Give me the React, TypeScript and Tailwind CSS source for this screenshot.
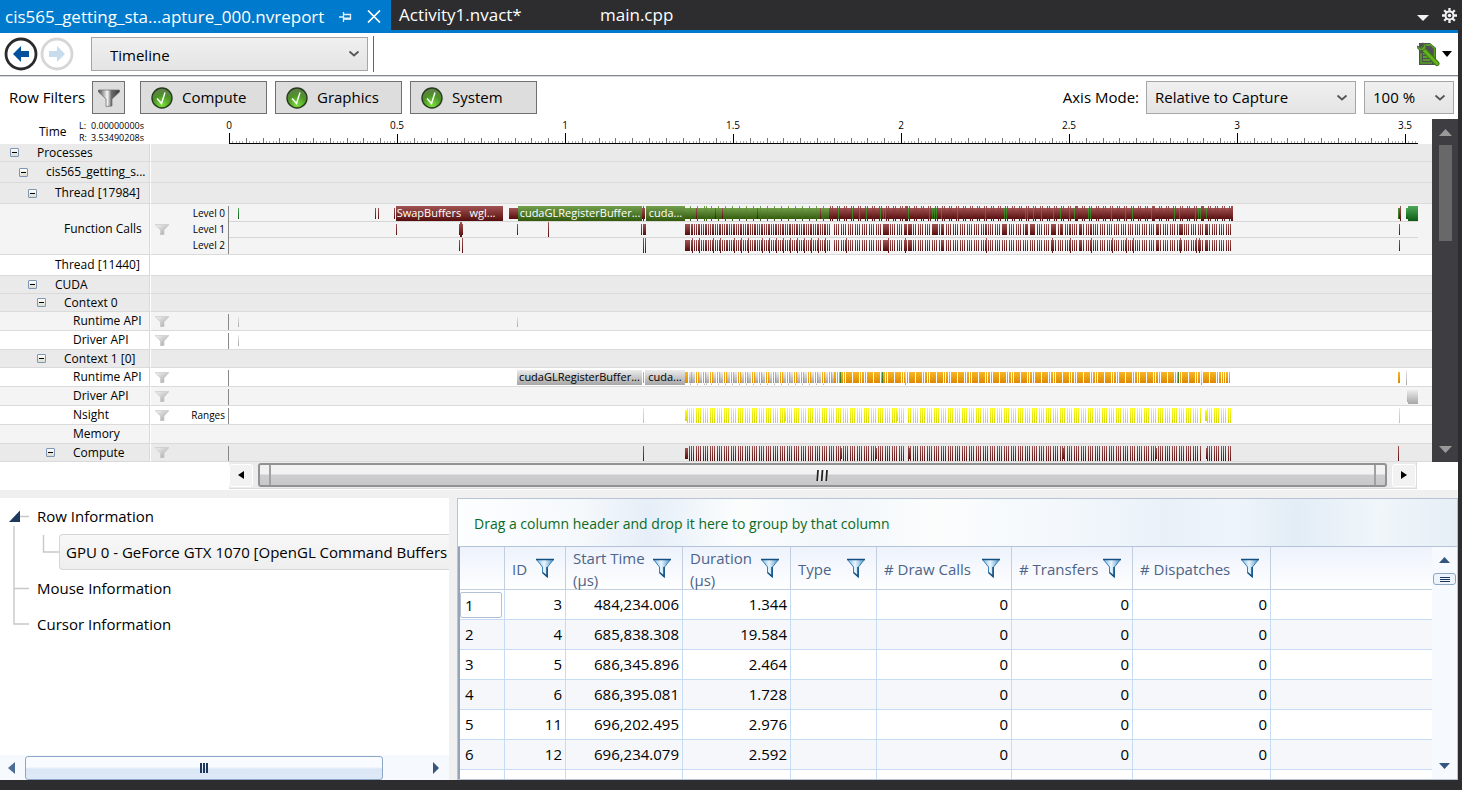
import type { ReactNode } from 'react';

type Span = [number, number];
type Fill = 'maroon' | 'green' | 'grass' | 'olive' | 'orange' | 'silver' | 'yellow';
type Layer = { fill: Fill; y: number; h: number; spans: Span[] };
type Block = { label: string; start: number; width: number; tone: string };

const AXIS_START = 229;
const AXIS_WIDTH = 1189;

const one = (xs: number[], w = 1): Span[] => xs.map((x) => [x, w]);

const every = (from: number, to: number, step: number, parts: Span[]): Span[] => {
  const out: Span[] = [];
  for (let x = from; x < to; x += step) {
    for (const [dx, w] of parts) if (x + dx + w <= to) out.push([x + dx, w]);
  }
  return out;
};

const toPath = (spans: Span[], y: number, h: number) =>
  spans.map(([x, w]) => `M${x} ${y}h${w}v${h}h${-w}z`).join('');

const swatches: Record<Fill, [string, string]> = {
  maroon: ['#a25353', '#560d0d'],
  green: ['#73a04b', '#335a0c'],
  grass: ['#4fa85a', '#0b5c12'],
  olive: ['#4f8f3c', '#2f7410'],
  orange: ['#f8b824', '#de8700'],
  silver: ['#ececec', '#a6a6a6'],
  yellow: ['#ffff22', '#d6d600'],
};

const Gradients = () => (
  <svg width="0" height="0" className="absolute" aria-hidden="true">
    <defs>
      {(Object.keys(swatches) as Fill[]).map((k) => (
        <linearGradient key={k} id={`g-${k}`} x1="0" y1="0" x2="0" y2="1">
          <stop offset="0" stopColor={swatches[k][0]} />
          <stop offset="1" stopColor={swatches[k][1]} />
        </linearGradient>
      ))}
      <linearGradient id="g-funnel" x1="0" y1="0" x2="1" y2="1">
        <stop offset="0" stopColor="#f4f4f4" />
        <stop offset="1" stopColor="#a2a2a2" />
      </linearGradient>
      <linearGradient id="g-funnel-dark" x1="0" y1="0" x2="1" y2="0">
        <stop offset="0" stopColor="#4a4a4a" />
        <stop offset="0.42" stopColor="#f6f6f6" />
        <stop offset="0.62" stopColor="#6a6a6a" />
        <stop offset="1" stopColor="#3a3a3a" />
      </linearGradient>
      <linearGradient id="g-funnel-blue" x1="0" y1="0" x2="1" y2="0">
        <stop offset="0" stopColor="#7ab8e4" />
        <stop offset="0.45" stopColor="#eaf6fd" />
        <stop offset="1" stopColor="#4a92ca" />
      </linearGradient>
      <radialGradient id="g-check" cx="0.5" cy="0.85" r="0.8">
        <stop offset="0" stopColor="#7ce03c" />
        <stop offset="0.6" stopColor="#4c9426" />
        <stop offset="1" stopColor="#5f7d4c" />
      </radialGradient>
    </defs>
  </svg>
);

const Chart = ({ height, layers, lines = [] }: { height: number; layers: Layer[]; lines?: number[] }) => (
  <svg
    className="block w-full"
    height={height}
    viewBox={`${AXIS_START} 0 ${AXIS_WIDTH} ${height}`}
    preserveAspectRatio="none"
    shapeRendering="crispEdges"
    aria-hidden="true"
  >
    {lines.map((y) => (
      <rect key={y} x={AXIS_START} y={y} width={AXIS_WIDTH} height="1" fill="#d6d6d6" />
    ))}
    {layers.map((l, i) => (
      <path key={i} d={toPath(l.spans, l.y, l.h)} fill={`url(#g-${l.fill})`} />
    ))}
  </svg>
);

const SmallFunnel = () => (
  <svg width="14" height="11" viewBox="0 0 14 11" aria-hidden="true">
    <path d="M0 0.5h14L9 6v4.5L5.5 11V6z" fill="url(#g-funnel)" stroke="#c4c4c4" strokeWidth="0.6" />
  </svg>
);

const levelOneEarly = every(691, 832, 7, [[0, 2], [3, 1], [5, 1]]);
const levelLate = every(834, 1231, 7, [[0, 1], [2, 1], [4, 1]]);

const functionLayers: Layer[] = [
  { fill: 'grass', y: 4, h: 11, spans: one([238]) },
  { fill: 'maroon', y: 4, h: 11, spans: [[375, 1], [378, 1], [394, 1], [509, 9], [642, 1], [644, 1]] },
  { fill: 'maroon', y: 2, h: 15, spans: one([643]) },
  { fill: 'green', y: 4, h: 11, spans: [[685, 144]] },
  { fill: 'green', y: 2, h: 15, spans: [...every(690, 829, 7, [[0, 1]]), [706, 1]] },
  { fill: 'maroon', y: 4, h: 11, spans: [...one([696, 715, 722, 757, 820]), [829, 403]] },
  { fill: 'maroon', y: 2, h: 15, spans: [...every(830, 1230, 7, [[0, 1], [2, 1]]), [905, 3], [1076, 2], [1153, 2], [1202, 2], [1231, 2]] },
  {
    fill: 'olive',
    y: 4,
    h: 11,
    spans: one([
      838, 852, 859, 866, 880, 883, 885, 908, 929, 932, 934, 936, 941, 957, 985, 1004, 1006, 1025, 1027, 1033,
      1041, 1053, 1060, 1069, 1074, 1088, 1090, 1111, 1125, 1132, 1151, 1174, 1179, 1195, 1198, 1200, 1206, 1398,
    ]),
  },
  { fill: 'maroon', y: 2, h: 15, spans: [[1400, 1]] },
  { fill: 'maroon', y: 4, h: 11, spans: [[1399, 1]] },
  { fill: 'grass', y: 4, h: 11, spans: [[1406, 2]] },
  { fill: 'grass', y: 2, h: 15, spans: [[1408, 10]] },
  {
    fill: 'maroon',
    y: 20,
    h: 11,
    spans: [
      [396, 1], [459, 4], [517, 1], [641, 1], [643, 3], [685, 5], ...levelOneEarly, ...levelLate,
      [883, 6], [904, 2], [909, 3], [932, 6], [941, 3], [985, 2], [1002, 4], [1025, 2], [1031, 3], [1051, 4],
      [1061, 2], [1069, 2], [1079, 3], [1090, 2], [1156, 3], [1179, 4], [1205, 3], [1399, 1],
    ],
  },
  { fill: 'maroon', y: 18, h: 15, spans: [[460, 2], [548, 1]] },
  {
    fill: 'maroon',
    y: 36,
    h: 11,
    spans: [
      [459, 1], [685, 5], ...levelOneEarly, ...levelLate, [884, 4], [904, 2], [909, 3], [941, 3],
      [1079, 3], [1156, 3], [1205, 3], [1399, 1],
    ],
  },
  {
    fill: 'maroon',
    y: 34,
    h: 15,
    spans: one([
      462, 643, 645, 692, 699, 713, 720, 734, 741, 748, 762, 769, 776, 783, 790, 797, 804, 811, 818, 825, 846,
      888, 905, 986, 1052, 1070, 1091, 1112, 1126, 1133, 1180, 1196, 1199,
    ]),
  },
];

const runtimeLayers: Layer[] = [
  { fill: 'orange', y: 4, h: 11, spans: [[643, 1], [685, 3]] },
  { fill: 'silver', y: 4, h: 11, spans: [[689, 2], ...every(691, 835, 7, [[1, 3]])] },
  { fill: 'silver', y: 15, h: 2, spans: [...every(690, 828, 7, [[0, 1]]), [706, 1]] },
  { fill: 'orange', y: 4, h: 11, spans: every(691, 835, 7, [[0, 1], [5, 1]]) },
  { fill: 'orange', y: 4, h: 11, spans: every(834, 1231, 7, [[0, 2], [3, 1], [5, 1]]) },
  { fill: 'orange', y: 4, h: 11, spans: [...every(847, 1228, 21, [[0, 4], [7, 4]]), [1398, 2]] },
  { fill: 'olive', y: 4, h: 11, spans: one([840, 882, 1178]) },
  { fill: 'silver', y: 2, h: 15, spans: [[905, 1], [1201, 1], [1406, 1]] },
];

const tripled = (from: number): Span[] =>
  every(from, 1232, 7, [[0, 1], [2, 1], [4, 1]]).filter(([x]) => x !== 906 && x !== 1202 && x !== 1204);

type Row = {
  label: string;
  depth: number;
  open?: boolean;
  height: string;
  bg: string;
  filter?: boolean;
  levels?: string[];
  chart?: ReactNode;
  blocks?: Block[];
};

const GROUP = 'bg-[#eaeaea]';
const SHADE = 'bg-[#f4f4f4]';
const maroonBlock = 'bg-linear-to-b from-[#a25353] to-[#560d0d] text-white';
const greenBlock = 'bg-linear-to-b from-[#73a04b] to-[#335a0c] text-white';
const silverBlock = 'bg-linear-to-b from-[#ececec] to-[#a6a6a6] text-black';

const rows: Row[] = [
  { label: 'Processes', depth: 0, open: true, height: 'h-[18px]', bg: GROUP },
  { label: 'cis565_getting_s...', depth: 1, open: true, height: 'h-[21px]', bg: GROUP },
  { label: 'Thread [17984]', depth: 2, open: true, height: 'h-[21px]', bg: GROUP },
  {
    label: 'Function Calls',
    depth: 3,
    height: 'h-[51px]',
    bg: SHADE,
    filter: true,
    levels: ['Level 0', 'Level 1', 'Level 2'],
    chart: <Chart height={50} layers={functionLayers} lines={[17, 33]} />,
    blocks: [
      { label: 'SwapBuffers', start: 396, width: 66, tone: maroonBlock },
      { label: 'wgl...', start: 462, width: 41, tone: maroonBlock },
      { label: 'cudaGLRegisterBuffer...', start: 518, width: 124, tone: greenBlock },
      { label: 'cuda...', start: 646, width: 39, tone: greenBlock },
    ],
  },
  { label: 'Thread [11440]', depth: 2, height: 'h-[21px]', bg: 'bg-white' },
  { label: 'CUDA', depth: 2, open: true, height: 'h-[18px]', bg: GROUP },
  { label: 'Context 0', depth: 3, open: true, height: 'h-[18px]', bg: GROUP },
  {
    label: 'Runtime API', depth: 4, height: 'h-[19px]', bg: SHADE, filter: true,
    chart: <Chart height={18} layers={[{ fill: 'silver', y: 4, h: 11, spans: one([238, 517]) }]} />,
  },
  {
    label: 'Driver API', depth: 4, height: 'h-[19px]', bg: 'bg-white', filter: true,
    chart: <Chart height={18} layers={[{ fill: 'silver', y: 4, h: 11, spans: one([238]) }]} />,
  },
  { label: 'Context 1 [0]', depth: 3, open: true, height: 'h-[18px]', bg: GROUP },
  {
    label: 'Runtime API', depth: 4, height: 'h-[19px]', bg: 'bg-white', filter: true,
    chart: <Chart height={18} layers={runtimeLayers} />,
    blocks: [
      { label: 'cudaGLRegisterBuffer...', start: 517, width: 125, tone: silverBlock },
      { label: 'cuda...', start: 645, width: 40, tone: silverBlock },
    ],
  },
  {
    label: 'Driver API', depth: 4, height: 'h-[19px]', bg: SHADE, filter: true,
    chart: <Chart height={18} layers={[{ fill: 'silver', y: 3, h: 12, spans: [[1407, 1]] }, { fill: 'silver', y: 3, h: 14, spans: [[1408, 10]] }]} />,
  },
  {
    label: 'Nsight', depth: 4, height: 'h-[19px]', bg: 'bg-white', filter: true, levels: ['Ranges'],
    chart: (
      <Chart
        height={18}
        layers={[
          { fill: 'yellow', y: 4, h: 11, spans: [[685, 2], [785, 1], [897, 1], [1205, 2]] },
          { fill: 'yellow', y: 2, h: 15, spans: [[643, 1], [687, 1], ...tripled(689), [1399, 1]] },
        ]}
      />
    ),
  },
  { label: 'Memory', depth: 4, height: 'h-[19px]', bg: SHADE },
  {
    label: 'Compute', depth: 4, open: true, height: 'h-[18px]', bg: GROUP, filter: true,
    chart: (
      <Chart
        height={17}
        layers={[
          { fill: 'maroon', y: 4, h: 11, spans: [[685, 3], [841, 1], [876, 1], [908, 3], [1063, 2], [1155, 2], [1206, 2]] },
          { fill: 'maroon', y: 2, h: 15, spans: [[643, 1], ...tripled(689), [1398, 1]] },
        ]}
      />
    ),
  },
];

const indents = ['pl-[10px]', 'pl-[19px]', 'pl-[28px]', 'pl-[37px]', 'pl-[46px]'];
const pct = (n: number) => `${(n / AXIS_WIDTH) * 100}%`;

const TimelineRow = ({ row }: { row: Row }) => (
  <div className={`flex text-[12px] ${row.height} ${row.bg}`}>
    <div className={`flex w-[150px] shrink-0 items-center overflow-hidden border-r border-b border-[#dadada] ${indents[row.depth]}`}>
      {row.open ? (
        <button
          aria-label={`Collapse ${row.label}`}
          className="flex h-[9px] w-[9px] shrink-0 items-center justify-center rounded-[1px] border border-[#7d96b4] bg-linear-to-b from-white to-[#dcdcd4]"
        >
          <span className="h-px w-[5px] bg-black" />
        </button>
      ) : (
        <span className="w-[9px] shrink-0" />
      )}
      <span className="ml-[18px] leading-4 whitespace-nowrap">{row.label}</span>
    </div>
    <div className="flex min-w-0 flex-1 border-b border-l border-b-[#dadada] border-l-white">
      <div className="flex w-[78px] shrink-0 items-center pr-[4px] pl-[4px]">
        {row.filter && (
          <button aria-label={`Filter ${row.label}`}>
            <SmallFunnel />
          </button>
        )}
        {row.levels && (
          <div className="ml-auto text-right text-[10px] leading-4">
            {row.levels.map((l) => (
              <div key={l}>{l}</div>
            ))}
          </div>
        )}
      </div>
      {row.chart && (
        <div className="relative mr-[14px] min-w-0 flex-1">
          <span className="absolute top-[2px] bottom-0 -left-px w-px bg-[#888]" />
          {row.chart}
          {row.blocks?.map((b) => (
            <span
              key={b.start}
              className={`absolute top-[2px] h-[15px] overflow-hidden text-center text-[11px] leading-[14px] whitespace-nowrap ${b.tone}`}
              style={{ left: pct(b.start - AXIS_START), width: pct(b.width) }}
            >
              {b.label}
            </span>
          ))}
        </div>
      )}
    </div>
  </div>
);

const Ruler = () => {
  const ticks = Array.from({ length: 354 }, (_, i) => i);
  return (
    <div className="relative mr-[14px] h-[25px] min-w-0 flex-1">
      <svg
        className="block h-[25px] w-full"
        viewBox={`0 0 ${AXIS_WIDTH} 25`}
        preserveAspectRatio="none"
        shapeRendering="crispEdges"
        aria-hidden="true"
      >
        {ticks.map((i) => {
          const top = i % 100 === 0 ? 14 : i % 50 === 0 ? 15 : i % 5 === 0 ? 19 : 22;
          const color = i % 50 === 0 ? '#000' : i % 5 === 0 ? '#777' : '#aaa';
          return <rect key={i} x={Math.round(i * 3.36)} y={top} width="1" height={24 - top} fill={color} />;
        })}
        <rect x="0" y="24" width={AXIS_WIDTH} height="1" fill="#000" />
      </svg>
      {['0', '0.5', '1', '1.5', '2', '2.5', '3', '3.5'].map((t, i) => (
        <span
          key={t}
          className="absolute top-0 -translate-x-1/2 text-[10px] leading-3"
          style={{ left: pct(i * 168) }}
        >
          {t}
        </span>
      ))}
    </div>
  );
};

const Chevron = () => (
  <svg width="12" height="8" viewBox="0 0 12 8" className="pointer-events-none absolute inset-y-0 right-[8px] my-auto" aria-hidden="true">
    <path d="M1.5 1.5l4.5 4 4.5-4" fill="none" stroke="#555" strokeWidth="1.7" />
  </svg>
);

const Picker = ({ label, value, box, pad }: { label: string; value: string; box: string; pad: string }) => (
  <span className={`relative inline-block ${box}`}>
    <select
      aria-label={label}
      defaultValue={value}
      className={`h-full w-full appearance-none border border-[#a6a6a6] bg-linear-to-b from-[#f0f0f0] to-[#e4e4e4] text-[15px] ${pad}`}
    >
      <option>{value}</option>
    </select>
    <Chevron />
  </span>
);

const FilterToggle = ({ label }: { label: string }) => (
  <button aria-pressed="true" className="flex h-[33px] w-[127px] items-center border border-[#707070] bg-[#dddddd] pl-[10px]">
    <svg width="22" height="22" viewBox="0 0 22 22" aria-hidden="true">
      <circle cx="11" cy="11" r="10" fill="url(#g-check)" stroke="#273b1c" strokeWidth="1.4" />
      <path d="M6 11.5l4.5 5L14 5.5" fill="none" stroke="#fff" strokeWidth="1.4" />
    </svg>
    <span className="ml-[9px] text-[15px]">{label}</span>
  </button>
);

const NavButton = ({ back }: { back?: boolean }) => (
  <button aria-label={back ? 'Back' : 'Forward'} className="shrink-0">
    <svg width="34" height="34" viewBox="0 0 34 34" aria-hidden="true">
      <circle cx="17" cy="17" r="15" fill="#fff" stroke={back ? '#2b2b2b' : '#d6d6d6'} strokeWidth="2.8" />
      {back ? (
        <path d="M9 17l8-8v5h8v6h-8v5z" fill="#00529c" />
      ) : (
        <path d="M25 17l-8-8v5H9v6h8v5z" fill="#c7dcec" />
      )}
    </svg>
  </button>
);

const TabStrip = () => (
  <header className="flex h-[33px] border-b-[3px] border-[#007acc] text-[17px] text-white">
    <div className="-mb-[3px] flex h-[33px] w-[391px] shrink-0 items-center bg-[#007acc] pl-[5px]">
      <span className="whitespace-nowrap">cis565_getting_sta...apture_000.nvreport</span>
      <button aria-label="Pin tab" className="ml-auto">
        <svg width="13" height="12" viewBox="0 0 13 12" fill="none" stroke="#e3f0fa" aria-hidden="true">
          <path d="M0 6h4.5M4.5 1v10M4.5 3.5h7v5M5 8h7" strokeWidth="1.3" />
          <path d="M5 7.5h7" strokeWidth="2" />
        </svg>
      </button>
      <button aria-label="Close tab" className="mr-[10px] ml-[15px]">
        <svg width="14" height="13" viewBox="0 0 14 13" aria-hidden="true">
          <path d="M1 0.5l12 12M13 0.5l-12 12" stroke="#fff" strokeWidth="1.7" />
        </svg>
      </button>
    </div>
    <button className="w-[201px] shrink-0 pl-[8px] text-left">Activity1.nvact*</button>
    <button className="pl-[8px] text-left">main.cpp</button>
    <button aria-label="Open documents" className="ml-auto pt-[5px]">
      <svg width="12" height="6" viewBox="0 0 12 6" aria-hidden="true">
        <path d="M0 0h12L6 6z" fill="#f1f1f1" />
      </svg>
    </button>
    <button aria-label="Window settings" className="mr-px ml-[13px]">
      <svg width="15" height="15" viewBox="0 0 15 15" aria-hidden="true">
        <path d="M7.5 0v15M0 7.5h15M2.2 2.2l10.6 10.6M12.8 2.2L2.2 12.8" stroke="#f1f1f1" strokeWidth="2.3" />
        <circle cx="7.5" cy="7.5" r="4" fill="#2d2d30" stroke="#f1f1f1" strokeWidth="2" />
        <circle cx="7.5" cy="7.5" r="1.8" fill="#f1f1f1" />
      </svg>
    </button>
  </header>
);

const Toolbar = () => (
  <div className="flex h-[43px] items-center border-b border-[#828790] pl-[4px]">
    <NavButton back />
    <span className="ml-[2px] flex">
      <NavButton />
    </span>
    <Picker label="View" value="Timeline" box="ml-[17px] h-[34px] w-[277px]" pad="pl-[18px] pt-[2px]" />
    <span className="ml-[5px] h-[36px] w-px bg-[#666]" />
    <button aria-label="Report options" className="mr-[6px] ml-auto flex items-center gap-[2px]">
      <svg width="24" height="26" viewBox="0 0 24 26" aria-hidden="true">
        <path d="M3 2h11l6 5v17H3z" fill="#4d5054" />
        <path d="M14 3l4.500 4.500V16M5 12v10h11" fill="none" stroke="#56a01c" strokeWidth="1.6" />
        <path d="M8 4h6M7 13h3M7 16h5M7 19h7" stroke="#64b41e" strokeWidth="1.5" />
        <path d="M6.500 7.500L21 22.500" stroke="#3e7a12" strokeWidth="5" strokeLinecap="round" />
        <path d="M6.500 7.500L21 22.500" stroke="#62b41c" strokeWidth="3" strokeLinecap="round" />
        <path d="M1.500 5c-0.500 4 4 6 7 3.500s1-6-2-6.500l1.500 3-2.500 2.500z" fill="#62a828" stroke="#4b5b40" />
      </svg>
      <svg width="10" height="6" viewBox="0 0 10 6" aria-hidden="true">
        <path d="M0 0h10L5 6z" fill="#000" />
      </svg>
    </button>
  </div>
);

const FilterBar = () => (
  <div className="flex h-[43px] items-center border-t border-[#d9d9d9] pr-[4px] pb-px pl-[9px] text-[15px]">
    <span className="w-[83px] shrink-0 whitespace-nowrap">Row Filters</span>
    <button aria-label="Row filters" className="flex h-[33px] w-[33px] items-center justify-center border border-[#707070] bg-[#dddddd]">
      <svg width="22" height="18" viewBox="0 0 22 18" aria-hidden="true">
        <path d="M0.500 1h21v2L14 10v7l-6 0.500V10L0.500 3z" fill="url(#g-funnel-dark)" stroke="#6a6a6a" strokeWidth="0.700" />
      </svg>
    </button>
    <div className="ml-[15px] flex gap-[8px]">
      <FilterToggle label="Compute" />
      <FilterToggle label="Graphics" />
      <FilterToggle label="System" />
    </div>
    <span className="ml-auto">Axis Mode:</span>
    <Picker label="Axis Mode" value="Relative to Capture" box="ml-[7px] h-[33px] w-[210px]" pad="pl-[8px]" />
    <Picker label="Zoom" value="100 %" box="ml-[8px] h-[33px] w-[90px]" pad="pl-[8px]" />
  </div>
);

const Timeline = () => (
  <section aria-label="Timeline" className="flex">
    <div className="min-w-0 flex-1">
      <div className="flex">
        <div className="flex w-[229px] shrink-0 items-center">
          <span className="w-[79px] pl-[39px] text-[12px]">Time</span>
          <div className="grid grid-cols-[12px_auto] text-[9px] leading-3">
            <span>L:</span>
            <span>0.00000000s</span>
            <span>R:</span>
            <span>3.53490208s</span>
          </div>
        </div>
        <Ruler />
      </div>
      {rows.map((r, i) => (
        <TimelineRow key={i} row={r} />
      ))}
    </div>
    <div className="flex w-[26px] shrink-0 flex-col items-center bg-[#3e3e42] pt-[10px] pb-[9px]">
      <button aria-label="Scroll timeline up">
        <svg width="13" height="7" viewBox="0 0 13 7" className="block">
          <path d="M0 7h13L6.500 0z" fill="#999" />
        </svg>
      </button>
      <span className="mt-[9px] h-[96px] w-[13px] bg-[#686868]" />
      <button aria-label="Scroll timeline down" className="mt-auto">
        <svg width="13" height="7" viewBox="0 0 13 7" className="block">
          <path d="M0 0h13L6.500 7z" fill="#999" />
        </svg>
      </button>
    </div>
  </section>
);

const TimeScroller = () => (
  <div className="flex h-[28px] pr-[41px] pl-[229px]">
    <div className="flex h-[27px] flex-1 items-center border-r border-b border-[#dcdcdc] bg-[#ececec]">
      <button aria-label="Scroll left" className="flex h-[23px] w-[24px] items-center justify-center rounded-[3px] border border-white bg-[#f2f2f2]">
        <svg width="6" height="8" viewBox="0 0 6 8"><path d="M6 0v8L0 4z" /></svg>
      </button>
      <div className="mx-[5px] flex h-[24px] flex-1 rounded-[3px] border-2 border-[#929292] bg-linear-to-b from-[#f2f2f2] from-45% via-[#cdcdcf] via-50% to-[#c8c8ca]">
        <span className="w-[11px] border-r-2 border-[#a0a0a0]" />
        <span className="flex flex-1 items-center justify-center">
          <svg width="13" height="11" viewBox="0 0 13 11">
            <path d="M2 0v11M6 0v11M10 0v11" stroke="#fafafa" strokeWidth="3" />
            <path d="M2 0l-0.800 11M6.500 0l-0.800 11M11 0l-0.800 11" stroke="#222" strokeWidth="1.800" />
          </svg>
        </span>
        <span className="w-[11px] border-l-2 border-[#a0a0a0]" />
      </div>
      <button aria-label="Scroll right" className="flex h-[23px] w-[24px] items-center justify-center rounded-[3px] border border-white bg-[#f2f2f2]">
        <svg width="6" height="8" viewBox="0 0 6 8"><path d="M0 0v8l6-4z" /></svg>
      </button>
    </div>
  </div>
);

const InfoTree = () => (
  <section aria-label="Information" className="flex w-[449px] shrink-0 flex-col overflow-hidden bg-white">
    <div className="relative text-[15px]">
      <svg width="62" height="132" viewBox="0 0 62 132" className="absolute top-0 left-0" aria-hidden="true">
        <path d="M14 28v98h15M14 90.500h15M20 18.500h9M43.500 37v17h16" fill="none" stroke="#c8c8c8" strokeWidth="1.400" />
        <path d="M9 24L20 12.500V24z" fill="#1e395b" />
      </svg>
      <button className="flex h-[36px] items-center pl-[37px]">Row Information</button>
      <div className="pl-[59px]">
        <button className="flex h-[36px] w-full items-center rounded-l-[4px] border border-r-0 border-[#d6d6d6] bg-linear-to-b from-[#f8f8f9] to-[#eeeeee] pl-[6px] whitespace-nowrap">
          GPU 0 - GeForce GTX 1070 [OpenGL Command Buffers
        </button>
      </div>
      <button className="flex h-[36px] items-center pl-[37px]">Mouse Information</button>
      <button className="flex h-[36px] items-center pl-[37px]">Cursor Information</button>
    </div>
    <div className="mt-auto flex h-[25px] shrink-0 items-center bg-[#f6f9fe] pr-[10px] pl-[8px]">
      <button aria-label="Scroll tree left">
        <svg width="7" height="12" viewBox="0 0 7 12"><path d="M7 0v12L0 6z" fill="#4f6d94" /></svg>
      </button>
      <span className="ml-[10px] flex h-[24px] w-[358px] items-center justify-center gap-px rounded-[3px] border border-[#8ea6c6] bg-linear-to-b from-[#f8fbff] from-45% via-[#dbe7f6] via-55% to-[#dfe9f7]">
        <span className="h-[10px] w-[2px] bg-[#1e395b]" />
        <span className="h-[10px] w-[2px] bg-[#1e395b]" />
        <span className="h-[10px] w-[2px] bg-[#1e395b]" />
      </span>
      <button aria-label="Scroll tree right" className="ml-auto">
        <svg width="6" height="12" viewBox="0 0 6 12"><path d="M0 0v12l6-6z" fill="#35567f" /></svg>
      </button>
    </div>
  </section>
);

const columns = ['ID', 'Start Time (µs)', 'Duration (µs)', 'Type', '# Draw Calls', '# Transfers', '# Dispatches'];

const records = [
  ['3', '484,234.006', '1.344'],
  ['4', '685,838.308', '19.584'],
  ['5', '686,345.896', '2.464'],
  ['6', '686,395.081', '1.728'],
  ['11', '696,202.495', '2.976'],
  ['12', '696,234.079', '2.592'],
];

const cell = 'border-r border-b border-[#c6dcf4] px-[3px] text-right';

const CommandTable = () => (
  <section aria-label="Command buffers" className="ml-[8px] flex min-w-0 flex-1 flex-col overflow-hidden border border-[#b8c4d6] bg-white">
    <div className="flex h-[48px] shrink-0 items-center border-b border-[#b4c3d8] bg-[linear-gradient(90deg,#fcfeff_0%,#f6f9fc_12%,#e6eef8_19%,#fbfdfd_28%,#f3f7fb_38%,#fbfdfd_48%,#f4f8fc_60%,#e9f1f8_71%,#eef4fa_78%,#e2edf6_84%,#f0f6fa_92%,#e6eff7_100%)] pt-px pl-[16px] text-[14px] text-[#0b6b22]">
      Drag a column header and drop it here to group by that column
    </div>
    <div className="flex min-h-0 flex-1">
      <div className="min-w-0 flex-1 overflow-hidden">
        <table className="w-full table-fixed border-separate border-spacing-0 border-l-2 border-[#94a3b8] text-[15px]">
          <colgroup>
            <col className="w-[45px]" />
            <col className="w-[61px]" />
            <col className="w-[117px]" />
            <col className="w-[108px]" />
            <col className="w-[86px]" />
            <col className="w-[135px]" />
            <col className="w-[121px]" />
            <col className="w-[138px]" />
            <col />
          </colgroup>
          <thead className="bg-linear-to-b from-[#edf2fc] to-white text-[#4c6488]">
            <tr>
              <th className="h-[43px] border-r border-b border-[#c3cfe0]" />
              {columns.map((c) => (
                <th key={c} className="h-[43px] border-r border-b border-[#c3cfe0] p-0 font-normal">
                  <div className="flex h-[42px] items-center justify-between pr-[10px] pl-[7px] text-left leading-[22px]">
                    <span className={c.includes('(') ? 'w-[72px] pt-px' : 'pt-px whitespace-nowrap'}>{c}</span>
                    <button aria-label={`Filter ${c}`} className="shrink-0">
                      <svg width="20" height="20" viewBox="0 0 20 20" className="block" aria-hidden="true">
                        <path d="M1.500 1.500h17l-6 7.500v10l-5-4.500V9z" fill="url(#g-funnel-blue)" stroke="#3d7fb5" />
                        <path d="M1 1.500h18M12 9v9.500l-4.500-4" fill="none" stroke="#14507f" strokeWidth="1.500" />
                      </svg>
                    </button>
                  </div>
                </th>
              ))}
              <th className="h-[43px] border-b border-[#c3cfe0]" />
            </tr>
          </thead>
          <tbody>
            {records.map((r, i) => (
              <tr key={r[0]} className="h-[30px] odd:bg-white even:bg-[#f5f7fb]">
                <td className="border-r border-b border-[#c6dcf4] p-0">
                  <div className={i === 0 ? 'mr-[2px] h-[26px] rounded-[2px] border border-[#b4c0d4] pl-[4px] leading-[25px]' : 'pl-[5px]'}>{i + 1}</div>
                </td>
                <td className={cell}>{r[0]}</td>
                <td className={cell}>{r[1]}</td>
                <td className={cell}>{r[2]}</td>
                <td className={cell} />
                <td className={cell}>0</td>
                <td className={cell}>0</td>
                <td className={cell}>0</td>
                <td className="border-b border-[#c6dcf4]" />
              </tr>
            ))}
            <tr className="h-[30px] bg-white">
              {['n', ...columns].map((c) => (
                <td key={c} className={cell} />
              ))}
              <td />
            </tr>
          </tbody>
        </table>
      </div>
      <div className="flex w-[25px] shrink-0 flex-col items-center bg-[#f6f9fe] pt-[10px] pb-[10px]">
        <button aria-label="Scroll table up">
          <svg width="11" height="6" viewBox="0 0 11 6" className="block"><path d="M0 6h11L5.500 0z" fill="#35567f" /></svg>
        </button>
        <span className="mt-[10px] flex h-[12px] w-[23px] flex-col items-center justify-center gap-px rounded-[3px] border border-[#8ea6c6] bg-[#eef4fc]">
          <span className="h-px w-[10px] bg-[#1e395b]" />
          <span className="h-px w-[10px] bg-[#1e395b]" />
          <span className="h-px w-[10px] bg-[#1e395b]" />
        </span>
        <button aria-label="Scroll table down" className="mt-auto">
          <svg width="11" height="6" viewBox="0 0 11 6" className="block"><path d="M0 0h11L5.500 6z" fill="#35567f" /></svg>
        </button>
      </div>
    </div>
  </section>
);

export default function App() {
  return (
    <div className="flex h-screen flex-col bg-[#2d2d30] pr-[4px] pb-[10px] font-['Segoe_UI','Open_Sans',sans-serif] text-black">
      <Gradients />
      <TabStrip />
      <main className="flex min-h-0 flex-1 flex-col bg-white">
        <Toolbar />
        <FilterBar />
        <Timeline />
        <TimeScroller />
        <div className="flex min-h-0 flex-1 bg-[#f0f0f0] pt-[8px]">
          <InfoTree />
          <CommandTable />
        </div>
      </main>
    </div>
  );
}
